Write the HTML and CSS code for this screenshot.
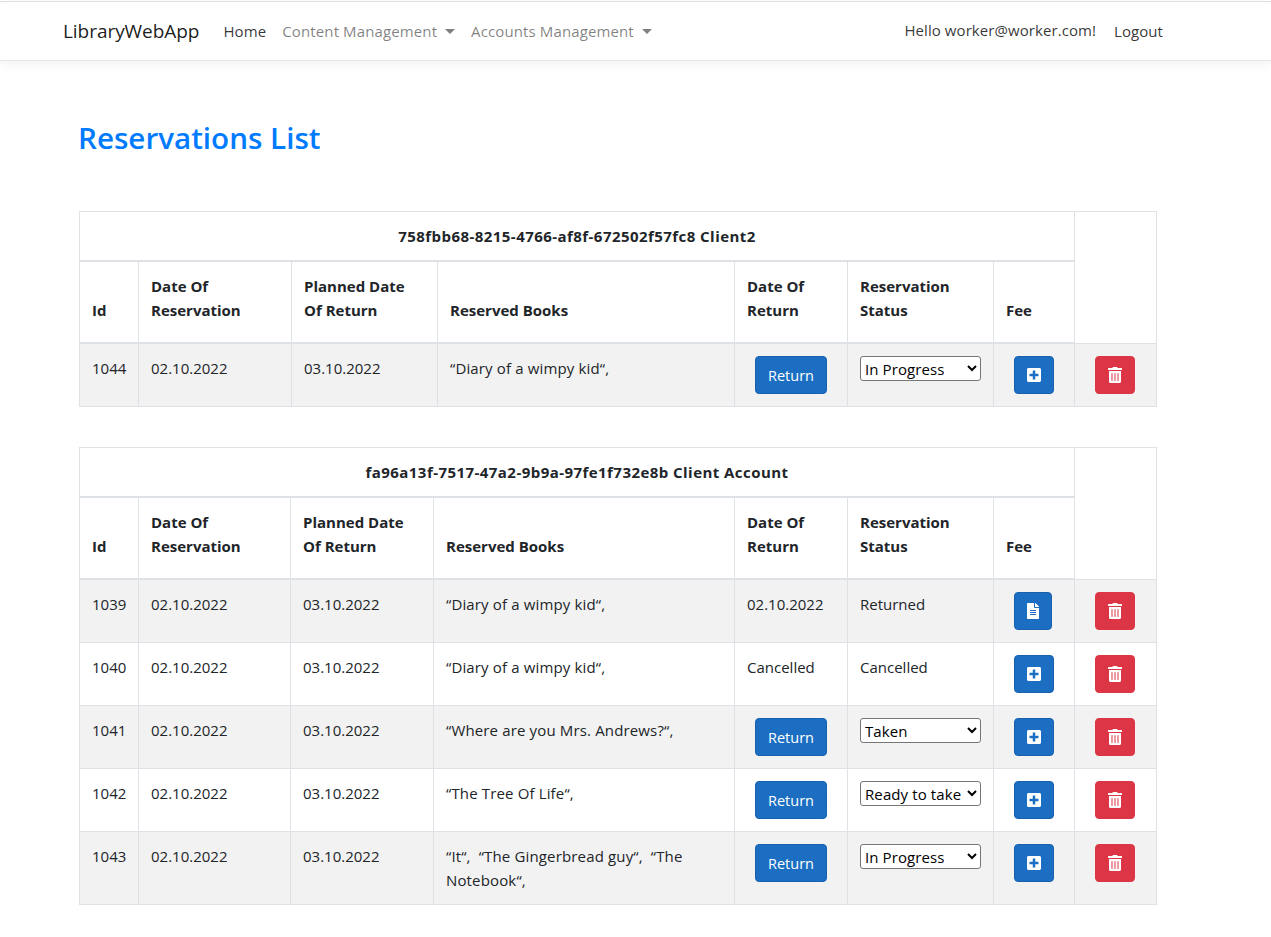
FILE: index.html
```html
<!DOCTYPE html>
<html lang="en">
<head>
<meta charset="utf-8">
<title>Reservations List</title>
<link rel="stylesheet" href="styles.css">
</head>
<body>
<svg class="sprite" xmlns="http://www.w3.org/2000/svg">
  <symbol id="i-trash" viewBox="0 0 448 512"><path fill="currentColor" d="M32 464a48 48 0 0 0 48 48h288a48 48 0 0 0 48-48V128H32zm272-256a16 16 0 0 1 32 0v224a16 16 0 0 1-32 0zm-96 0a16 16 0 0 1 32 0v224a16 16 0 0 1-32 0zm-96 0a16 16 0 0 1 32 0v224a16 16 0 0 1-32 0zM432 32H312l-9.4-18.7A24 24 0 0 0 281.1 0H166.8a23.72 23.72 0 0 0-21.4 13.3L136 32H16A16 16 0 0 0 0 48v32a16 16 0 0 0 16 16h416a16 16 0 0 0 16-16V48a16 16 0 0 0-16-16z"/></symbol>
  <symbol id="i-plus" viewBox="0 0 448 512"><path fill="currentColor" d="M400 32H48C21.5 32 0 53.5 0 80v352c0 26.5 21.5 48 48 48h352c26.5 0 48-21.5 48-48V80c0-26.5-21.5-48-48-48zm-32 252c0 6.6-5.4 12-12 12h-92v92c0 6.6-5.4 12-12 12h-56c-6.6 0-12-5.4-12-12v-92H92c-6.6 0-12-5.4-12-12v-56c0-6.6 5.4-12 12-12h92v-92c0-6.6 5.4-12 12-12h56c6.6 0 12 5.4 12 12v92h92c6.6 0 12 5.4 12 12v56z"/></symbol>
  <symbol id="i-file" viewBox="0 0 384 512"><path fill="currentColor" d="M224 136V0H24C10.7 0 0 10.7 0 24v464c0 13.3 10.7 24 24 24h336c13.3 0 24-10.7 24-24V160H248c-13.2 0-24-10.8-24-24zm64 236c0 6.6-5.4 12-12 12H108c-6.6 0-12-5.4-12-12v-8c0-6.6 5.4-12 12-12h168c6.6 0 12 5.4 12 12v8zm0-64c0 6.6-5.4 12-12 12H108c-6.6 0-12-5.4-12-12v-8c0-6.6 5.4-12 12-12h168c6.6 0 12 5.4 12 12v8zm0-72v8c0 6.6-5.4 12-12 12H108c-6.6 0-12-5.4-12-12v-8c0-6.6 5.4-12 12-12h168c6.6 0 12 5.4 12 12zm96-114.1v6.1H256V0h6.1c6.4 0 12.5 2.5 17 7l97.9 98c4.5 4.5 7 10.6 7 16.9z"/></symbol>
</svg>
<header class="navbar">
  <a class="brand" href="#">LibraryWebApp</a>
  <nav class="nav-main">
    <a class="nav-link nav-active" href="#">Home</a>
    <a class="nav-link nav-drop" href="#">Content Management</a>
    <a class="nav-link nav-drop" href="#">Accounts Management</a>
  </nav>
  <div class="nav-user">
    <span class="hello">Hello worker@worker.com!</span>
    <a class="nav-link nav-active" href="#">Logout</a>
  </div>
</header>
<main class="content">
  <h1 class="title">Reservations List</h1>

  <table class="res-table table-a">
    <colgroup><col class="c-id"><col class="c-date"><col class="c-plan"><col class="c-books"><col class="c-ret"><col class="c-status"><col class="c-fee"><col class="c-del"></colgroup>
    <thead>
      <tr><th colspan="7" class="owner">758fbb68-8215-4766-af8f-672502f57fc8 Client2</th><th rowspan="2" class="blank"></th></tr>
      <tr class="heads"><th>Id</th><th>Date Of Reservation</th><th>Planned Date Of Return</th><th>Reserved Books</th><th>Date Of Return</th><th>Reservation Status</th><th>Fee</th></tr>
    </thead>
    <tbody>
      <tr><td>1044</td><td>02.10.2022</td><td>03.10.2022</td><td class="books">“Diary of a wimpy kid“,</td>
        <td><button class="btn btn-blue btn-text">Return</button></td>
        <td><select class="status"><option>In Progress</option><option>Taken</option><option>Ready to take</option></select></td>
        <td><button class="btn btn-blue" aria-label="Add fee"><svg class="ico w14"><use href="#i-plus"/></svg></button></td>
        <td><button class="btn btn-red" aria-label="Delete"><svg class="ico w14"><use href="#i-trash"/></svg></button></td></tr>
    </tbody>
  </table>

  <table class="res-table table-b">
    <colgroup><col class="c-id"><col class="c-date"><col class="c-plan"><col class="c-books"><col class="c-ret"><col class="c-status"><col class="c-fee"><col class="c-del"></colgroup>
    <thead>
      <tr><th colspan="7" class="owner">fa96a13f-7517-47a2-9b9a-97fe1f732e8b Client Account</th><th rowspan="2" class="blank"></th></tr>
      <tr class="heads"><th>Id</th><th>Date Of Reservation</th><th>Planned Date Of Return</th><th>Reserved Books</th><th>Date Of Return</th><th>Reservation Status</th><th>Fee</th></tr>
    </thead>
    <tbody>
      <tr><td>1039</td><td>02.10.2022</td><td>03.10.2022</td><td class="books">“Diary of a wimpy kid“,</td><td>02.10.2022</td><td>Returned</td>
        <td><button class="btn btn-blue" aria-label="View fee"><svg class="ico w12"><use href="#i-file"/></svg></button></td>
        <td><button class="btn btn-red" aria-label="Delete"><svg class="ico w14"><use href="#i-trash"/></svg></button></td></tr>
      <tr><td>1040</td><td>02.10.2022</td><td>03.10.2022</td><td class="books">“Diary of a wimpy kid“,</td><td>Cancelled</td><td>Cancelled</td>
        <td><button class="btn btn-blue" aria-label="Add fee"><svg class="ico w14"><use href="#i-plus"/></svg></button></td>
        <td><button class="btn btn-red" aria-label="Delete"><svg class="ico w14"><use href="#i-trash"/></svg></button></td></tr>
      <tr><td>1041</td><td>02.10.2022</td><td>03.10.2022</td><td class="books">“Where are you Mrs. Andrews?“,</td>
        <td><button class="btn btn-blue btn-text">Return</button></td>
        <td><select class="status"><option>Taken</option><option>In Progress</option><option>Ready to take</option></select></td>
        <td><button class="btn btn-blue" aria-label="Add fee"><svg class="ico w14"><use href="#i-plus"/></svg></button></td>
        <td><button class="btn btn-red" aria-label="Delete"><svg class="ico w14"><use href="#i-trash"/></svg></button></td></tr>
      <tr><td>1042</td><td>02.10.2022</td><td>03.10.2022</td><td class="books">“The Tree Of Life“,</td>
        <td><button class="btn btn-blue btn-text">Return</button></td>
        <td><select class="status"><option>Ready to take</option><option>In Progress</option><option>Taken</option></select></td>
        <td><button class="btn btn-blue" aria-label="Add fee"><svg class="ico w14"><use href="#i-plus"/></svg></button></td>
        <td><button class="btn btn-red" aria-label="Delete"><svg class="ico w14"><use href="#i-trash"/></svg></button></td></tr>
      <tr><td>1043</td><td>02.10.2022</td><td>03.10.2022</td><td class="books">“It“,&nbsp; “The Gingerbread guy“,&nbsp; “The Notebook“,</td>
        <td><button class="btn btn-blue btn-text">Return</button></td>
        <td><select class="status"><option>In Progress</option><option>Taken</option><option>Ready to take</option></select></td>
        <td><button class="btn btn-blue" aria-label="Add fee"><svg class="ico w14"><use href="#i-plus"/></svg></button></td>
        <td><button class="btn btn-red" aria-label="Delete"><svg class="ico w14"><use href="#i-trash"/></svg></button></td></tr>
    </tbody>
  </table>
</main>
</body>
</html>
```
FILE: styles.css
```css
* { box-sizing: border-box; }
html, body { margin: 0; padding: 0; }
body {
  font-family: "Open Sans", "Noto Sans", sans-serif;
  font-size: 15px;
  line-height: 24px;
  color: #212529;
  background: #fff;
}
a { text-decoration: none; color: inherit; }
.sprite { display: none; }

.navbar {
  display: flex;
  align-items: center;
  height: 60px;
  margin-top: 1px;
  padding: 0 108px 0 63px;
  border-top: 1px solid #dfdfdf;
  border-bottom: 1px solid #e5e5e5;
  box-shadow: 0 4px 12px rgba(0,0,0,.05);
}
.brand { font-size: 19px; letter-spacing: -.05px; color: rgba(0,0,0,.9); margin-right: 24px; }
.nav-main { display: flex; gap: 16px; letter-spacing: .12px; }
.nav-user { display: flex; align-items: center; gap: 18px; margin-left: auto; letter-spacing: .07px; color: rgba(0,0,0,.8); }
.hello { position: relative; top: -1px; }
.nav-link { color: rgba(0,0,0,.5); }
.nav-active { color: rgba(0,0,0,.8); }
.nav-drop::after {
  content: "";
  display: inline-block;
  margin-left: 8px;
  vertical-align: 3px;
  border-top: 5px solid currentColor;
  border-left: 5px solid transparent;
  border-right: 5px solid transparent;
}

.content { padding: 0 0 32px 79px; width: 1157px; }
.title {
  margin: 0 0 0 -1px;
  padding: 57px 0 53px;
  font-size: 29.6px;
  line-height: 40px;
  font-weight: 600;
  color: #007bff;
}

.res-table {
  width: 1078px;
  table-layout: fixed;
  border-collapse: collapse;
  margin-bottom: 40px;
}
.res-table th, .res-table td {
  padding: 12px;
  border: 1px solid #dee2e6;
  vertical-align: top;
  text-align: left;
}
.res-table th { vertical-align: bottom; font-weight: 700; }
.res-table .heads th { padding-bottom: 20px; border-bottom-width: 2px; }
.res-table th.owner { border-bottom-width: 2px; text-align: center; letter-spacing: .45px; }
.res-table th.blank { border-bottom-width: 1px; }
.res-table tbody tr:nth-child(odd) { background: #f2f2f2; }
.books { letter-spacing: .15px; }

.c-id { width: 59px; }
.c-ret { width: 113px; }
.c-status { width: 146px; }
.c-fee { width: 81px; }
.c-del { width: 82px; }
.table-a .c-date { width: 153px; }
.table-a .c-plan { width: 146px; }
.table-a .c-books { width: 297px; }
.table-b .c-date { width: 152px; }
.table-b .c-plan { width: 143px; }
.table-b .c-books { width: 301px; }

.btn {
  display: inline-flex;
  align-items: center;
  justify-content: center;
  height: 38px;
  margin-left: 8px;
  padding: 0 12px;
  border: 1px solid transparent;
  border-radius: 4px;
  font: inherit;
  color: #fff;
  vertical-align: top;
}
.btn-text { font-size: 14.5px; padding-top: 2px; }
.btn-blue { background: #1b6ec2; border-color: #1861ac; }
.btn-red { background: #dc3545; border-color: #dc3545; }
.ico { display: block; height: 16px; color: #fff; }
.w14 { width: 14px; }
.w12 { width: 12px; }

.status {
  display: block;
  width: 121px;
  height: 25px;
  font-family: inherit;
  font-size: 15px;
  letter-spacing: .1px;
  color: #000;
  background: #fff;
  border: 1px solid #767676;
  border-radius: 3px;
}
```
